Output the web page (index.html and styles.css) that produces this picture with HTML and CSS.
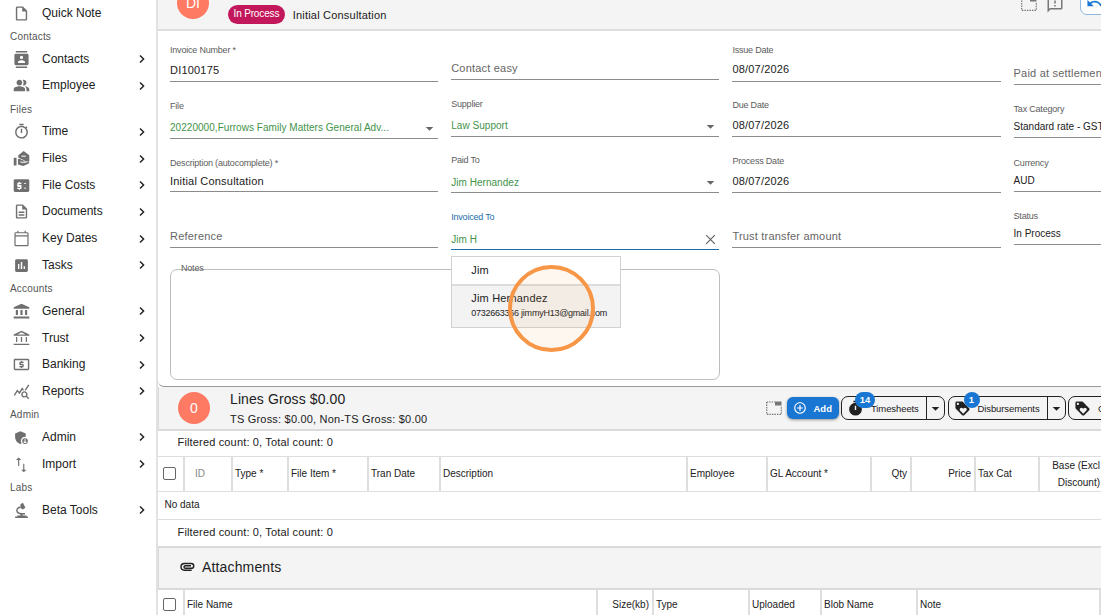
FILE: index.html
```html
<!DOCTYPE html>
<html lang="en">
<head>
    <meta charset="UTF-8">
    <meta name="viewport" content="width=device-width, initial-scale=1.0">
    <title>Invoice DI100175</title>

    <link rel="stylesheet" href="styles.css">
</head>
<body>
    <!-- icon sprite -->
    <svg class="sprite" xmlns="http://www.w3.org/2000/svg">
        <symbol id="i-note" viewBox="0 0 24 24"><path d="M14 2H6c-1.100 0-2 .9-2 2v16c0 1.100.9 2 2 2h12c1.100 0 2-.9 2-2V8l-6-6zM6 20V4h7v5h5v11H6z"/></symbol>
        <symbol id="i-contacts" viewBox="0 0 24 24"><path d="M20 0H4v2h16V0zM4 24h16v-2H4v2zM20 4H4c-1.100 0-2 .9-2 2v12c0 1.100.9 2 2 2h16c1.100 0 2-.9 2-2V6c0-1.100-.9-2-2-2zm-8 2.750a2.250 2.250 0 1 1 0 4.500 2.250 2.250 0 0 1 0-4.500zM17 17H7v-1.500c0-1.670 3.330-2.500 5-2.500s5 .83 5 2.500V17z"/></symbol>
        <symbol id="i-people" viewBox="0 0 24 24"><path d="M16.670 13.130C18.040 14.060 19 15.320 19 17v3h4v-3c0-2.180-3.570-3.470-6.330-3.870zM15 12c2.210 0 4-1.790 4-4s-1.790-4-4-4c-.47 0-.91.1-1.330.24C14.500 5.270 15 6.580 15 8s-.5 2.730-1.330 3.760c.42.14.86.24 1.330.24zM9 12c2.210 0 4-1.790 4-4s-1.790-4-4-4-4 1.790-4 4 1.790 4 4 4zm0 1c-2.670 0-8 1.340-8 4v3h16v-3c0-2.660-5.330-4-8-4z"/></symbol>
        <symbol id="i-timer" viewBox="0 0 24 24"><path d="M15 1H9v2h6V1zm-4 13h2V8h-2v6zm8.030-6.610 1.420-1.420c-.43-.51-.9-.99-1.410-1.410l-1.420 1.420A8.962 8.962 0 0 0 12 4c-4.970 0-9 4.030-9 9s4.020 9 9 9a8.994 8.994 0 0 0 7.030-14.610zM12 20c-3.870 0-7-3.130-7-7s3.130-7 7-7 7 3.130 7 7-3.130 7-7 7z"/></symbol>
        <symbol id="i-files" viewBox="0 0 24 24"><path d="M1 11h4v11H1zM15 1.500l8 6v9l-6.500-.5c0-1.200-.5-1.700-1.300-2L9 11.500 7.500 11V7.500z"/><path d="M7 12.800h2.500l6 2.400c.6.300.8.800.8 1.500h-3.600l-2-.8-.5 1.300 2.300.9h4.200l4.800-1c1 .1 1.500.8 1.500 1.700L14.500 22.500 7 20.300z"/><path class="cut" d="M12 8h6v1.500h-6z"/></symbol>
        <symbol id="i-costs" viewBox="0 0 24 24"><path d="M21 3H3C1.900 3 1 3.900 1 5v14c0 1.100.9 2 2 2h18c1.100 0 2-.9 2-2V5c0-1.100-.9-2-2-2zM12 10H8v1h3c.6 0 1 .4 1 1v4c0 .6-.4 1-1 1h-1v1H8v-1H6v-2h4v-1H7c-.6 0-1-.4-1-1V9c0-.6.4-1 1-1h1V7h2v1h2v2zm5 7-2-2h4l-2 2zm-2-7 2-2 2 2h-4z"/></symbol>
        <symbol id="i-doc" viewBox="0 0 24 24"><path d="M8 16h8v2H8zm0-4h8v2H8zm6-10H6c-1.100 0-2 .9-2 2v16c0 1.100.89 2 1.990 2H18c1.100 0 2-.9 2-2V8l-6-6zm4 18H6V4h7v5h5v11z"/></symbol>
        <symbol id="i-calendar" viewBox="0 0 24 24"><path d="M20 3h-2V1h-1.700v2H7.700V1H6v2H4c-1.100 0-2 .9-2 2v16c0 1.100.9 2 2 2h16c1.100 0 2-.9 2-2V5c0-1.100-.9-2-2-2zm.3 18.300H3.700V9h16.600v12.300zm0-14H3.700V4.700h16.600v2.600z"/></symbol>
        <symbol id="i-poll" viewBox="0 0 24 24"><path d="M19 3H5c-1.100 0-2 .9-2 2v14c0 1.100.9 2 2 2h14c1.100 0 2-.9 2-2V5c0-1.100-.9-2-2-2zM9 17H7v-7h2v7zm4 0h-2V7h2v10zm4 0h-2v-4h2v4z"/></symbol>
        <symbol id="i-bank" viewBox="0 0 24 24"><path d="M4 10v7h3v-7H4zm6.500 0v7h3v-7h-3zM1 22h22v-3H1v3zm16-12v7h3v-7h-3zM12 1 1 6v2h22V6L12 1z"/></symbol>
        <symbol id="i-bank-line" viewBox="0 0 24 24"><path d="M6 10H4.300v7H6v-7zm6.900 0h-1.800v7h1.800v-7zM23 19.500H1v1.700h22v-1.700zM19.700 10H18v7h1.700v-7zM12 3.200 17.700 6.400H6.300L12 3.200M12 1 1 6.500V8h22V6.500L12 1z"/></symbol>
        <symbol id="i-dollar" viewBox="0 0 24 24"><path d="M11 17h2v-1h1c.55 0 1-.45 1-1v-3c0-.55-.45-1-1-1h-3v-1h4V8h-2V7h-2v1h-1c-.55 0-1 .45-1 1v3c0 .55.450 1 1 1h3v1H9v2h2v1zM21 4H3C1.900 4 1 4.900 1 6v12c0 1.100.9 2 2 2h18c1.100 0 2-.9 2-2V6c0-1.100-.9-2-2-2zm0 14H3V6h18v12z"/></symbol>
        <symbol id="i-reports" viewBox="0 0 24 24"><path d="M19.880 18.470c.44-.7.7-1.510.7-2.390 0-2.490-2.010-4.500-4.500-4.500s-4.500 2.010-4.500 4.500 2.010 4.500 4.490 4.500c.88 0 1.700-.26 2.390-.7L21.580 23 23 21.580l-3.120-3.110zm-3.800.11a2.500 2.500 0 1 1 0-5 2.500 2.500 0 0 1 0 5zm-.36-8.500c-.74.02-1.450.18-2.100.45l-.55-.83-3.800 6.180-3.010-3.520-3.630 5.810L1 17l5-8 3 3.500L13 6l2.720 4.080zm2.590.5c-.64-.28-1.330-.45-2.050-.49L21.380 2 23 3.180l-4.690 7.400z"/></symbol>
        <symbol id="i-shield" viewBox="0 0 24 24"><path d="M17 11c.34 0 .67.04 1 .09V6.270L10.500 3 3 6.270v4.910c0 4.540 3.200 8.790 7.500 9.820.55-.13 1.080-.32 1.600-.55A6 6 0 0 1 17 11zm0 2a4 4 0 1 0 0 8 4 4 0 0 0 0-8zm0 1.380a1.120 1.120 0 1 1 0 2.240 1.120 1.120 0 0 1 0-2.240zm0 5.370a2.750 2.750 0 0 1-2.260-1.180c.05-.73 1.530-1.130 2.260-1.130s2.210.4 2.260 1.130A2.750 2.750 0 0 1 17 19.750z"/></symbol>
        <symbol id="i-import" viewBox="0 0 24 24"><path d="M16 19.500V11h-1.600v8.500h-3l3.800 3.500 3.800-3.500h-3zM8 2 4.200 5.500h3V14h1.600V5.500h3L8 2z"/></symbol>
        <symbol id="i-beta" viewBox="0 0 24 24"><path d="M3 20.500h18v2H3v-2zM10.500 16h3v3H19v2H6v-2h4.500zM10.500 3l3.500-2 3.500 7-3.500 2.500-3.500-2z"/><path d="M10.500 7c-4 1-6 4-4.500 7 1 2 3 2.500 6 2.500h5" fill="none" stroke="currentColor" stroke-width="2"/></symbol>
        <symbol id="i-chevron" viewBox="0 0 24 24"><path d="m8 4.800 7.200 7.200L8 19.200" fill="none" stroke="currentColor" stroke-width="2.900"/></symbol>
        <symbol id="i-caret" viewBox="0 0 24 24"><path d="m5 9 7 7 7-7z"/></symbol>
        <symbol id="i-close" viewBox="0 0 24 24"><path d="M4 4 20 20M20 4 4 20" fill="none" stroke="currentColor" stroke-width="2.300"/></symbol>
        <symbol id="i-dotted" viewBox="0 0 16 14"><path d="M.7 1v12.300h14.600V5" fill="none" stroke="currentColor" stroke-width="1.200" stroke-dasharray="1.500 1"/><path d="M.7 1H9" fill="none" stroke="currentColor" stroke-width="1.200" stroke-dasharray="1.500 1"/><path d="M9 .5h6.500v4H9z"/></symbol>
        <symbol id="i-feedback" viewBox="0 0 24 24"><path d="M20 2H4c-1.100 0-2 .9-2 2v18l4-4h14c1.100 0 2-.9 2-2V4c0-1.100-.9-2-2-2zm0 14H5.200L4 17.200V4h16v12zm-9-4h2v2h-2zm0-6h2v4h-2z"/></symbol>
        <symbol id="i-undo" viewBox="0 0 24 24"><path d="M12.500 8c-2.650 0-5.050.99-6.900 2.600L2 7v9h9l-3.620-3.620c1.390-1.160 3.160-1.880 5.120-1.880 3.540 0 6.550 2.310 7.600 5.500l2.370-.78C21.080 11.030 17.150 8 12.500 8z"/></symbol>
        <symbol id="i-plus" viewBox="0 0 24 24"><path d="M13 7h-2v4H7v2h4v4h2v-4h4v-2h-4V7zm-1-5C6.480 2 2 6.480 2 12s4.480 10 10 10 10-4.480 10-10S17.520 2 12 2zm0 18c-4.410 0-8-3.590-8-8s3.590-8 8-8 8 3.590 8 8-3.590 8-8 8z"/></symbol>
        <symbol id="i-clock" viewBox="0 0 24 24"><path d="M9 1h6v2H9zM12 4a9 9 0 1 0 0 18 9 9 0 0 0 0-18zm1 10h-2V8h2z"/></symbol>
        <symbol id="i-tag" viewBox="0 0 24 24"><path d="m21.410 11.580-9-9C12.050 2.220 11.550 2 11 2H4c-1.100 0-2 .9-2 2v7c0 .55.220 1.050.590 1.420l9 9c.36.36.86.58 1.410.58s1.050-.22 1.410-.59l7-7c.37-.36.590-.86.590-1.410s-.23-1.060-.590-1.420zM5.500 7C4.670 7 4 6.330 4 5.500S4.670 4 5.500 4 7 4.670 7 5.500 6.330 7 5.500 7zm11.770 8.270L13 19.540l-4.270-4.270a2.500 2.500 0 1 1 3.540-3.540l.73.74.73-.73a2.500 2.500 0 1 1 3.540 3.530z"/></symbol>
        <symbol id="i-clip" viewBox="0 0 24 24"><path d="M19 16.800H8a5 5 0 0 1 0-10h10.500a3.600 3.600 0 0 1 0 7.200H9.500a2 2 0 0 1 0-4H18" fill="none" stroke="currentColor" stroke-width="2.200"/></symbol>
    </svg>

    <aside class="sidebar">
        <a class="item"><svg class="icon"><use href="#i-note"/></svg><span>Quick Note</span></a>
        <h6 class="group">Contacts</h6>
        <a class="item"><svg class="icon"><use href="#i-contacts"/></svg><span>Contacts</span><svg class="chevron"><use href="#i-chevron"/></svg></a>
        <a class="item"><svg class="icon"><use href="#i-people"/></svg><span>Employee</span><svg class="chevron"><use href="#i-chevron"/></svg></a>
        <h6 class="group">Files</h6>
        <a class="item"><svg class="icon"><use href="#i-timer"/></svg><span>Time</span><svg class="chevron"><use href="#i-chevron"/></svg></a>
        <a class="item"><svg class="icon"><use href="#i-files"/></svg><span>Files</span><svg class="chevron"><use href="#i-chevron"/></svg></a>
        <a class="item"><svg class="icon"><use href="#i-costs"/></svg><span>File Costs</span><svg class="chevron"><use href="#i-chevron"/></svg></a>
        <a class="item"><svg class="icon"><use href="#i-doc"/></svg><span>Documents</span><svg class="chevron"><use href="#i-chevron"/></svg></a>
        <a class="item"><svg class="icon"><use href="#i-calendar"/></svg><span>Key Dates</span><svg class="chevron"><use href="#i-chevron"/></svg></a>
        <a class="item"><svg class="icon"><use href="#i-poll"/></svg><span>Tasks</span><svg class="chevron"><use href="#i-chevron"/></svg></a>
        <h6 class="group">Accounts</h6>
        <a class="item"><svg class="icon"><use href="#i-bank"/></svg><span>General</span><svg class="chevron"><use href="#i-chevron"/></svg></a>
        <a class="item"><svg class="icon"><use href="#i-bank-line"/></svg><span>Trust</span><svg class="chevron"><use href="#i-chevron"/></svg></a>
        <a class="item"><svg class="icon"><use href="#i-dollar"/></svg><span>Banking</span><svg class="chevron"><use href="#i-chevron"/></svg></a>
        <a class="item"><svg class="icon"><use href="#i-reports"/></svg><span>Reports</span><svg class="chevron"><use href="#i-chevron"/></svg></a>
        <h6 class="group">Admin</h6>
        <a class="item"><svg class="icon"><use href="#i-shield"/></svg><span>Admin</span><svg class="chevron"><use href="#i-chevron"/></svg></a>
        <a class="item"><svg class="icon"><use href="#i-import"/></svg><span>Import</span><svg class="chevron"><use href="#i-chevron"/></svg></a>
        <h6 class="group">Labs</h6>
        <a class="item"><svg class="icon"><use href="#i-beta"/></svg><span>Beta Tools</span><svg class="chevron"><use href="#i-chevron"/></svg></a>
    </aside>

    <main class="main">
        <header class="title-bar">
            <div class="avatar">DI</div>
            <div class="title-text">
                <span class="chip">In Process</span>
                <span class="subtitle">Initial Consultation</span>
            </div>
            <div class="title-tools">
                <svg class="dotted"><use href="#i-dotted"/></svg>
                <svg class="feedback"><use href="#i-feedback"/></svg>
                <button class="undo"><svg><use href="#i-undo"/></svg></button>
            </div>
        </header>

        <section class="invoice">
            <form class="form">
                <div class="column column-1">
                    <div class="field"><label>Invoice Number *</label><p>DI100175</p></div>
                    <div class="field select"><label>File</label><p>20220000,Furrows Family Matters General Adv...</p><svg class="caret"><use href="#i-caret"/></svg></div>
                    <div class="field compact"><label>Description (autocomplete) *</label><p>Initial Consultation</p></div>
                    <div class="field empty"><p>Reference</p></div>
                </div>
                <div class="column column-2">
                    <div class="field empty"><p>Contact easy</p></div>
                    <div class="field select"><label>Supplier</label><p>Law Support</p><svg class="caret"><use href="#i-caret"/></svg></div>
                    <div class="field select low"><label>Paid To</label><p>Jim Hernandez</p><svg class="caret"><use href="#i-caret"/></svg></div>
                    <div class="field select low active">
                        <label>Invoiced To</label><p>Jim H</p><svg class="clear"><use href="#i-close"/></svg>
                        <ul class="options">
                            <li>Jim</li>
                            <li class="selected">Jim Hernandez<small>0732663366 jimmyH13@gmail.com</small></li>
                        </ul>
                        <div class="pointer"></div>
                    </div>
                </div>
                <div class="column column-3">
                    <div class="field date"><label>Issue Date</label><p>08/07/2026</p></div>
                    <div class="field date"><label>Due Date</label><p>08/07/2026</p></div>
                    <div class="field date"><label>Process Date</label><p>08/07/2026</p></div>
                    <div class="field empty"><p>Trust transfer amount</p></div>
                </div>
                <div class="column column-4">
                    <div class="field empty"><p>Paid at settlement</p></div>
                    <div class="field compact small"><label>Tax Category</label><p>Standard rate - GST</p></div>
                    <div class="field compact small"><label>Currency</label><p>AUD</p></div>
                    <div class="field compact small"><label>Status</label><p>In Process</p></div>
                </div>
            </form>
            <div class="notes"><label>Notes</label></div>
        </section>

        <section class="lines">
            <header class="lines-bar">
                <div class="avatar">0</div>
                <div class="lines-title">
                    <h2>Lines Gross $0.00</h2>
                    <p>TS Gross: $0.00, Non-TS Gross: $0.00</p>
                </div>
                <div class="lines-tools">
                    <svg class="dotted"><use href="#i-dotted"/></svg>
                    <button class="add"><svg><use href="#i-plus"/></svg>Add</button>
                    <div class="split timesheets">
                        <button><svg><use href="#i-clock"/></svg>Timesheets</button>
                        <button class="drop"><svg><use href="#i-caret"/></svg></button>
                        <span class="badge">14</span>
                    </div>
                    <div class="split disbursements">
                        <button><svg><use href="#i-tag"/></svg>Disbursements</button>
                        <button class="drop"><svg><use href="#i-caret"/></svg></button>
                        <span class="badge">1</span>
                    </div>
                    <div class="split others">
                        <button><svg><use href="#i-tag"/></svg>Costs</button>
                    </div>
                </div>
            </header>
            <p class="count">Filtered count: 0, Total count: 0</p>
            <div class="row lines-row">
                <div class="check"><i></i></div>
                <div class="muted">ID</div>
                <div>Type *</div>
                <div>File Item *</div>
                <div>Tran Date</div>
                <div>Description</div>
                <div>Employee</div>
                <div>GL Account *</div>
                <div class="right">Qty</div>
                <div class="right">Price</div>
                <div>Tax Cat</div>
                <div class="right base">Base (Excl Discount)</div>
            </div>
            <p class="no-data">No data</p>
            <p class="count last">Filtered count: 0, Total count: 0</p>
        </section>

        <section class="attachments">
            <header class="attach-bar"><svg><use href="#i-clip"/></svg><h2>Attachments</h2></header>
            <div class="row attach-row">
                <div class="check"><i></i></div>
                <div>File Name</div>
                <div class="right">Size(kb)</div>
                <div>Type</div>
                <div>Uploaded</div>
                <div>Blob Name</div>
                <div>Note</div>
            </div>
        </section>
    </main>
</body>
</html>
```
FILE: styles.css
```css
*,
*::after,
*::before{
    box-sizing: border-box;
    margin: 0;
    padding: 0;
}
body{
    display: flex;
    height: 615px;
    overflow: hidden;
    background-color: white;
    color: #212121;
    font-family: "Liberation Sans", Arial, sans-serif;
    font-size: 10px;
}
svg{
    display: block;
    flex: none;
    fill: currentColor;
}
button{
    font-family: inherit;
    color: inherit;
    background: none;
    border: none;
}
h2{
    font-weight: normal;
}
.sprite{
    position: absolute;
    width: 0;
    height: 0;
}
.cut{
    fill: white;
}

/* Sidebar */
.sidebar{
    flex: none;
    width: 158px;
    margin-top: -0.6px;
    border-right: 2px solid #e2e2e2;
}
.item{
    display: flex;
    align-items: center;
    height: 26.7px;
    padding: 0 8px 0 13px;
    font-size: 12px;
}
.item .icon{
    width: 17px;
    height: 17px;
    margin: 1px 12px 0 0;
    color: #6f6f6f;
}
.chevron{
    width: 12px;
    height: 12px;
    margin: 1px 0 0 auto;
}
.group{
    height: 19.3px;
    padding-left: 10px;
    font-size: 10px;
    font-weight: normal;
    line-height: 21px;
    letter-spacing: 0.2px;
    color: #555;
}

/* Invoice header */
.main{
    flex: 1;
    min-width: 0;
    overflow: hidden;
}
.title-bar{
    display: flex;
    align-items: center;
    height: 57px;
    margin-top: -26px;
    padding: 2px 0 0 19px;
    background-color: #f4f4f4;
    border-bottom: 2px solid #dedede;
}
.avatar{
    display: flex;
    align-items: center;
    justify-content: center;
    flex: none;
    width: 32px;
    height: 32px;
    border-radius: 50%;
    background-color: #ff7a62;
    color: white;
    font-size: 14px;
}
.title-text{
    display: flex;
    align-items: center;
    align-self: flex-end;
    gap: 8px;
    padding: 0 0 5px 19px;
}
.chip{
    height: 19px;
    padding: 0 5.5px;
    border-radius: 10px;
    background-color: #c2185b;
    color: white;
    line-height: 18px;
    letter-spacing: -0.15px;
}
.subtitle{
    font-size: 11px;
    letter-spacing: 0.2px;
}
.title-tools{
    display: flex;
    align-items: center;
    flex: none;
    margin-left: auto;
    margin-right: -19px;
    color: #777;
}
.dotted{
    width: 16px;
    height: 14px;
    color: #777;
}
.title-tools .dotted{
    margin-top: 2px;
}
.feedback{
    width: 18px;
    height: 18px;
    margin: 5px 16px 0 9px;
}
.undo{
    width: 40px;
    height: 24px;
    padding-left: 5px;
    border: 1px solid #8fb7e0;
    border-radius: 7px;
    background-color: white;
    color: #1976d2;
}
.undo svg{
    width: 17px;
    height: 17px;
    margin-top: 2px;
}

/* Form */
.invoice{
    height: 356px;
    border-bottom: 1px solid #999;
    border-radius: 0 0 0 6px;
    background-color: white;
}
.form{
    display: grid;
    grid-template-columns: repeat(4, 268.300px);
    column-gap: 12.900px;
    height: 219px;
    padding-left: 12px;
}
.column{
    display: grid;
    align-content: start;
}
.column-1{
    grid-template-rows: 51px 57px 53px 56px;
}
.column-2{
    grid-template-rows: 49px 57px 56px 57px;
}
.column-3{
    grid-template-rows: 51px 55px 56px 55px;
}
.column-4{
    grid-template-rows: 54px 53px 54px 53px;
}
.field{
    position: relative;
    display: flex;
    flex-direction: column;
    justify-content: flex-end;
    border-bottom: 1px solid #8c8c8c;
}
.field label,
.notes label{
    margin-bottom: 7px;
    font-size: 9px;
    line-height: 12px;
    letter-spacing: -0.2px;
    color: #5c5c5c;
}
.field p{
    padding-bottom: 4px;
    font-size: 11px;
    line-height: 14px;
    letter-spacing: 0.2px;
    white-space: nowrap;
}
.field.select p{
    padding-bottom: 3px;
    font-size: 10px;
    letter-spacing: 0.040px;
    color: #43934a;
}
.field.select label{
    margin-bottom: 9px;
}
.field.select.low p{
    padding-bottom: 2px;
}
.field.select.low label{
    margin-bottom: 10px;
}
.field.compact label{
    margin-bottom: 5px;
}
.field.compact p{
    padding-bottom: 3px;
}
.field.small p{
    font-size: 10px;
    letter-spacing: 0;
}
.field.date p{
    padding-bottom: 4px;
}
.field.date label{
    margin-bottom: 7px;
}
.field.date:first-child p{
    padding-bottom: 5px;
}
.field.date:first-child label{
    margin-bottom: 6px;
}
.field.empty p{
    color: #666;
}
.caret,
.clear{
    position: absolute;
    right: 2px;
    bottom: 3px;
    width: 13px;
    height: 13px;
    color: #666;
}
.field.active{
    border-bottom-color: #1c6ca8;
}
.field.active label{
    color: #1c6ca8;
}

/* Autocomplete popup, opens over the notes box */
.options{
    position: absolute;
    z-index: 1;
    top: 63px;
    left: 0;
    width: 170px;
    border: 1px solid #d2d2d2;
    background-color: white;
    list-style-type: none;
    font-size: 11px;
    letter-spacing: 0.2px;
}
.options li{
    height: 27px;
    padding-left: 19px;
    line-height: 27px;
}
.options .selected{
    height: 43px;
    padding-top: 5px;
    border-top: 2px solid #dcdcdc;
    background-color: #f3f3f3;
    line-height: 15px;
}
.options small{
    display: block;
    font-size: 9px;
    letter-spacing: -0.24px;
    white-space: nowrap;
}
.pointer{
    position: absolute;
    z-index: 2;
    top: 72px;
    left: 57px;
    width: 87px;
    height: 87px;
    border: 4px solid #f79646;
    border-radius: 50%;
    background-color: rgba(247, 150, 70, 0.08);
}
.notes{
    width: 550px;
    height: 111px;
    margin: 19px 0 0 12px;
    padding-left: 10px;
    border: 1px solid #bdbdbd;
    border-radius: 7px;
}
.notes label{
    display: block;
    margin-top: -8px;
}

/* Lines */
.lines-bar{
    display: flex;
    align-items: center;
    height: 44px;
    padding-left: 19px;
    border: solid #dadada;
    border-width: 0 0 2px 1px;
    background-color: #f4f4f4;
}
.lines-title{
    padding: 2px 0 0 20px;
}
.lines-title h2{
    font-size: 14px;
    line-height: 20px;
    letter-spacing: 0.1px;
}
.lines-title p{
    font-size: 11px;
    line-height: 20px;
    letter-spacing: 0.2px;
}
.lines-tools{
    display: flex;
    align-items: center;
    flex: none;
    gap: 2.500px;
    margin-left: auto;
    margin-right: -32px;
}
.lines-tools .dotted{
    margin-right: 2px;
}
.add{
    display: flex;
    align-items: center;
    width: 52px;
    height: 22px;
    padding-left: 6px;
    border-radius: 6px;
    background-color: #1976d2;
    box-shadow: 0 1px 3px rgba(0, 0, 0, 0.4);
    color: white;
    font-size: 9.500px;
    font-weight: bold;
}
.add svg{
    width: 14px;
    height: 14px;
    margin-right: 7px;
}
.split{
    position: relative;
    display: flex;
    height: 24px;
    border: 1px solid #222;
    border-radius: 7px;
}
.split button{
    display: flex;
    align-items: center;
    padding-left: 5px;
    font-size: 9.500px;
    letter-spacing: -0.1px;
}
.split button svg{
    width: 17px;
    height: 17px;
    margin-right: 7px;
}
.split .drop{
    width: 18px;
    padding-left: 2px;
    border-left: 1px solid #222;
}
.split .drop svg{
    width: 13px;
    height: 13px;
}
.split button:first-child{
    flex: 1;
}
.timesheets{
    width: 104px;
}
.disbursements{
    width: 118px;
}
.others{
    width: 65px;
}
.badge{
    position: absolute;
    top: -5px;
    left: 13px;
    width: 20px;
    height: 16px;
    border-radius: 8px;
    background-color: #1976d2;
    color: white;
    font-size: 9.500px;
    font-weight: bold;
    line-height: 15px;
    text-align: center;
}
.disbursements .badge{
    left: 15px;
    width: 16px;
}
.count{
    height: 25px;
    padding-left: 19.500px;
    font-size: 11px;
    line-height: 23px;
    letter-spacing: 0.16px;
}
.row{
    display: grid;
    border: solid #dedede;
    border-width: 1px 0;
}
.row > div{
    display: flex;
    align-items: center;
    padding: 0 3px 2px 2px;
    border-right: 2px solid #dedede;
}
.row .check{
    padding-left: 5px;
}
.check i{
    width: 13px;
    height: 13px;
    border: 1.500px solid #666;
    border-radius: 2px;
}
.row .muted{
    justify-content: center;
    padding-right: 18px;
    color: #888;
}
.row .right{
    justify-content: flex-end;
    text-align: right;
}
.row .base{
    padding: 0 1px 0 8px;
    border: none;
    line-height: 17px;
}
.lines-row{
    grid-template-columns: 27px 48px 56px 80px 72px 247px 80px 104px 40px 64px 64px 61px;
    height: 36px;
}
.no-data{
    height: 28px;
    padding-left: 6.500px;
    border-bottom: 1px solid #dedede;
    line-height: 26px;
}
.count.last{
    height: 26px;
    line-height: 25px;
}

/* Attachments */
.attach-bar{
    display: flex;
    align-items: center;
    height: 44px;
    padding: 0 0 2px 20px;
    border: solid #dadada;
    border-width: 2px 0 2px 1px;
    background-color: #f4f4f4;
}
.attach-bar svg{
    width: 16px;
    height: 16px;
    margin-right: 7px;
}
.attach-bar h2{
    font-size: 14px;
    letter-spacing: 0.15px;
}
.attach-row{
    grid-template-columns: 27px 413px 56px 96px 72px 96px 1fr;
    height: 32px;
    border-top: none;
}
```
